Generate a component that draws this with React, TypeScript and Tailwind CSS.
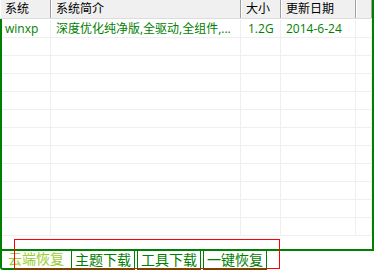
const FONT = "font-['Open_Sans','Noto_Sans_CJK_SC',sans-serif]"

const columns = [
  { key: 'name', label: '系统', width: 'w-[51px] shrink-0' },
  { key: 'desc', label: '系统简介', width: 'w-[190px] shrink-0' },
  { key: 'size', label: '大小', width: 'w-[40px] shrink-0' },
  { key: 'date', label: '更新日期', width: 'w-[75px] shrink-0' },
  { key: 'pad', label: '', width: 'flex-1 min-w-0' },
]

const rows = [
  { name: 'winxp', desc: '深度优化纯净版,全驱动,全组件,...', size: '1.2G', date: '2014-6-24', pad: '' },
]

const EMPTY_ROWS = 11

const tabs = ['主题下载', '工具下载', '一键恢复']

function HeaderCell({ label, width }: { label: string; width: string }) {
  return (
    <div
      className={`${width} h-full flex items-center pl-[5px] border-r border-r-[#a0a0a0] shadow-[inset_1px_0_0_#ffffff] text-[12px] text-black whitespace-nowrap`}
    >
      {label}
    </div>
  )
}

function Row({ cells }: { cells: Record<string, string> }) {
  return (
    <div className="h-[18px] flex border-b border-[#efefef]">
      {columns.map((c, i) => (
        <div
          key={c.key}
          className={`${i === 0 ? 'w-[49px] shrink-0 pl-[3px]' : `${c.width} pl-[5px]`} ${i === 2 ? 'pl-[7px]' : ''} h-full flex items-center border-r border-[#efefef] text-[12px] text-[#008000] whitespace-nowrap overflow-hidden`}
        >
          {cells[c.key]}
        </div>
      ))}
    </div>
  )
}

export default function App() {
  const blank = { name: '', desc: '', size: '', date: '', pad: '' }

  return (
    <div className={`${FONT} relative w-[374px] h-[272px] bg-white overflow-hidden`}>
      {/* list panel */}
      <div className="w-[374px] h-[251px] flex flex-col border-r-2 border-b-2 border-[#008000]">
        <div className="h-[19px] flex bg-[#f0f0f0] border-b border-[#dcdcdc] shrink-0">
          {columns.map((c) => (
            <HeaderCell key={c.key} label={c.label} width={c.width} />
          ))}
        </div>
        <div className="flex-1 flex flex-col border-l-2 border-[#008000] overflow-hidden">
          <div className="h-[1px] shrink-0" />
          {rows.map((r, i) => (
            <Row key={i} cells={r} />
          ))}
          {Array.from({ length: EMPTY_ROWS }).map((_, i) => (
            <Row key={`e${i}`} cells={blank} />
          ))}
        </div>
      </div>

      {/* tabs */}
      <div className="flex -mt-[2px] h-[21px]">
        <div className="w-[71px] h-full flex items-center pl-[6px] border-l-2 border-b-2 border-[#008000] rounded-bl-[3px] text-[14px] text-[#9acd32] leading-none">
          云端恢复
        </div>
        {tabs.map((t) => (
          <div
            key={t}
            className="mr-[2px] px-[3px] h-full flex items-center border border-[#008000] text-[14px] text-[#008000] leading-none"
          >
            {t}
          </div>
        ))}
      </div>

      {/* selection marquee */}
      <div className="absolute left-[14px] top-[239px] w-[266px] h-[30px] border border-[#ff0000] pointer-events-none" />
    </div>
  )
}
